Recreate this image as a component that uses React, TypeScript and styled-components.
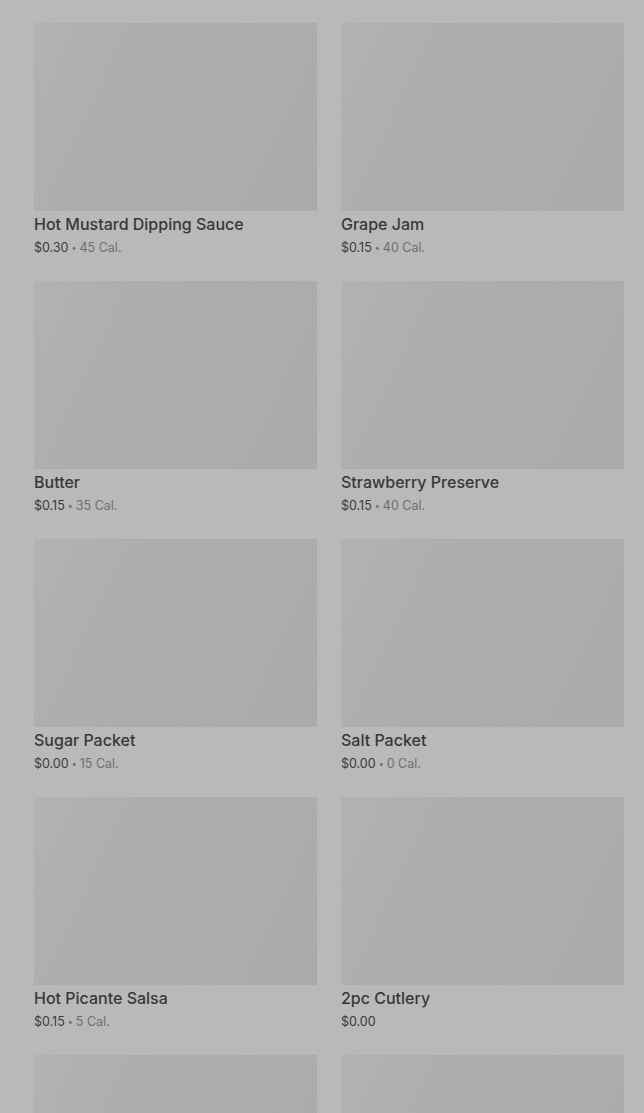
import React from 'react';
import styled, { createGlobalStyle } from 'styled-components';

const GlobalStyle = createGlobalStyle`
	html, body {
		margin: 0;
		padding: 0;
		background: #b9b9b9;
		font-family: Inter, "Noto Sans", sans-serif;
	}
`;

type Item = {
	name?: string;
	price?: string;
	cal?: string;
};

const items: Item[] = [
	{ name: 'Hot Mustard Dipping Sauce', price: '$0.30', cal: '45 Cal.' },
	{ name: 'Grape Jam', price: '$0.15', cal: '40 Cal.' },
	{ name: 'Butter', price: '$0.15', cal: '35 Cal.' },
	{ name: 'Strawberry Preserve', price: '$0.15', cal: '40 Cal.' },
	{ name: 'Sugar Packet', price: '$0.00', cal: '15 Cal.' },
	{ name: 'Salt Packet', price: '$0.00', cal: '0 Cal.' },
	{ name: 'Hot Picante Salsa', price: '$0.15', cal: '5 Cal.' },
	{ name: '2pc Cutlery', price: '$0.00' },
	// next row is only peeking in at the bottom
	{},
	{},
];

const Page = styled.div`
	height: 1113px;
	overflow: hidden;
	padding: 23px 20px 0 34px;
	box-sizing: border-box;
`;

const Grid = styled.div`
	display: grid;
	grid-template-columns: 283px 283px;
	column-gap: 24px;
	row-gap: 22px;
`;

const Card = styled.div`
	display: flex;
	flex-direction: column;
`;

const Thumb = styled.div`
	height: 188px;
	background: linear-gradient(115deg, #b2b2b2 0%, #adadad 35%, #acacac 70%, #aaaaaa 100%);
`;

const Name = styled.div`
	margin-top: 1px;
	font-size: 16px;
	font-weight: 500;
	line-height: 24px;
	color: #383838;
	white-space: nowrap;
`;

const Meta = styled.div`
	font-size: 12.5px;
	line-height: 23px;
	color: #3a3a3a;
	white-space: nowrap;
`;

const Dot = styled.span`
	font-size: 9px;
	margin: 0 3px;
	color: #6e6e6e;
	vertical-align: 1px;
`;

const Cal = styled.span`
	color: #6e6e6e;
`;

export default function App() {
	return (
		<>
			<GlobalStyle />
			<Page>
				<Grid>
					{items.map((item, i) => (
						<Card key={i}>
							<Thumb />
							{item.name && <Name>{item.name}</Name>}
							{item.price && (
								<Meta>
									{item.price}
									{item.cal && (
										<>
											<Dot>•</Dot>
											<Cal>{item.cal}</Cal>
										</>
									)}
								</Meta>
							)}
						</Card>
					))}
				</Grid>
			</Page>
		</>
	);
}
